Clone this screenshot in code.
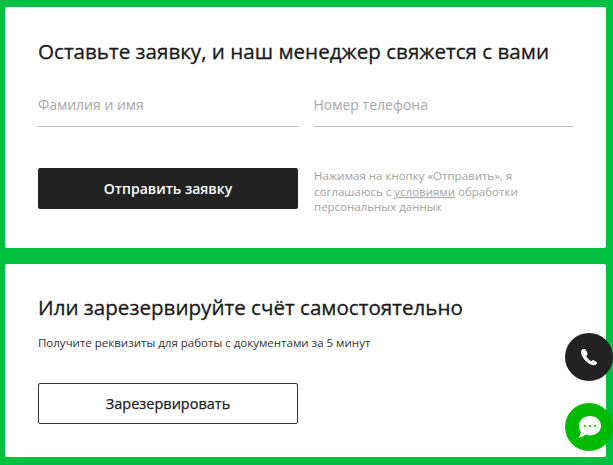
<div class="page">
  <section class="card first">
    <h2>Оставьте заявку, и наш менеджер свяжется с вами</h2>
    <div class="fields">
      <div class="field">Фамилия и имя</div>
      <div class="field">Номер телефона</div>
    </div>
    <div class="actions">
      <button class="btn dark">Отправить заявку</button>
      <p class="legal">Нажимая на кнопку «Отправить», я соглашаюсь с <span class="u">условиями</span> обработки персональных данных</p>
    </div>
  </section>
  <section class="card second">
    <h2>Или зарезервируйте счёт самостоятельно</h2>
    <p class="sub">Получите реквизиты для работы с документами за 5 минут</p>
    <button class="btn outline">Зарезервировать</button>
  </section>
  <div class="fab call">
    <svg width="18" height="18" viewBox="0 0 18 18"><path fill="#fff" d="M2.6 1.2 C1.6 1.6 0.8 2.8 1 4.6 C1.300 7.200 3 10.200 5.400 12.800 C8 15.400 11.200 17.200 13.600 17.200 C15.200 17.200 16.400 16.200 16.900 15.200 C17.100 14.800 17 14.400 16.600 14.100 L13.800 12.200 C13.400 11.900 12.900 12 12.500 12.300 L11.300 13.300 C9.800 12.600 7.400 10.200 6.200 7.900 L7.300 6.700 C7.600 6.300 7.700 5.900 7.500 5.400 L5.800 1.700 C5.600 1.200 5.200 1 4.700 1 Z"/></svg>
  </div>
  <div class="fab chat">
    <svg width="26" height="26" viewBox="0 0 26 26"><path fill="#fff" d="M14 2 C20 2 25 6.200 25 11.700 C25 17.200 20 21.400 14 21.400 C12.400 21.400 10.900 21.100 9.500 20.600 C7.500 22.400 5.200 23.400 2.400 23.800 C3.800 22.200 4.700 20.200 4.900 18 C3.600 16.400 3 14.200 3 11.700 C3 6.200 8 2 14 2 Z"/><circle cx="8.800" cy="12" r="1.100" fill="#00b900"/><circle cx="14" cy="12" r="1.100" fill="#00b900"/><circle cx="19.200" cy="12" r="1.100" fill="#00b900"/></svg>
  </div>
</div>

<style>
  :global(body) {
    margin: 0;
    background: #00bf41;
  }
  .page {
    position: relative;
    box-sizing: border-box;
    height: 465px;
    overflow: hidden;
    padding: 7px 7px 8px 5px;
    display: flex;
    flex-direction: column;
    gap: 16px;
    font-family: "Open Sans", sans-serif;
  }
  .card {
    background: #fff;
    box-sizing: border-box;
    padding-left: 33px;
    padding-right: 33px;
    border-radius: 2px;
  }
  .first {
    height: 241px;
    padding-top: 31px;
  }
  .second {
    height: 193px;
    padding-top: 30px;
  }
  h2 {
    margin: 0;
    font-size: 20.6px;
    line-height: 27px;
    font-weight: 400;
    -webkit-text-stroke: 0.3px #1a1a1a;
    color: #1a1a1a;
  }
  .fields {
    display: flex;
    gap: 16px;
    margin-top: 22px;
  }
  .field {
    flex: 1;
    height: 40px;
    box-sizing: border-box;
    border-bottom: 1px solid #bdbdbd;
    font-size: 14px;
    line-height: 35px;
    color: #a8a8a8;
  }
  .actions {
    display: flex;
    gap: 16px;
    margin-top: 41px;
  }
  .btn {
    font-family: inherit;
    display: block;
    box-sizing: border-box;
    width: 260px;
    height: 41px;
    flex: none;
    border-radius: 2px;
    font-size: 14px;
    font-weight: 600;
    padding: 0;
  }
  .dark {
    background: #222;
    border: none;
    color: #fff;
  }
  .outline {
    background: #fff;
    border: 1px solid #333;
    color: #222;
    margin-top: 32px;
    font-size: 14.5px;
    font-weight: 400;
    -webkit-text-stroke: 0.25px #222;
  }
  .legal {
    margin: 0;
    font-size: 11.5px;
    line-height: 15.5px;
    color: #a3a3a3;
    flex: 1;
  }
  .u {
    text-decoration: underline;
  }
  .sub {
    margin: 14px 0 0;
    font-size: 11.5px;
    line-height: 16px;
    color: #333;
  }
  .fab {
    position: absolute;
    left: 565px;
    width: 48px;
    height: 48px;
    border-radius: 50%;
    display: flex;
    align-items: center;
    justify-content: center;
  }
  .call {
    top: 333px;
    background: #222;
  }
  .chat {
    top: 403px;
    background: #00b900;
  }
</style>
